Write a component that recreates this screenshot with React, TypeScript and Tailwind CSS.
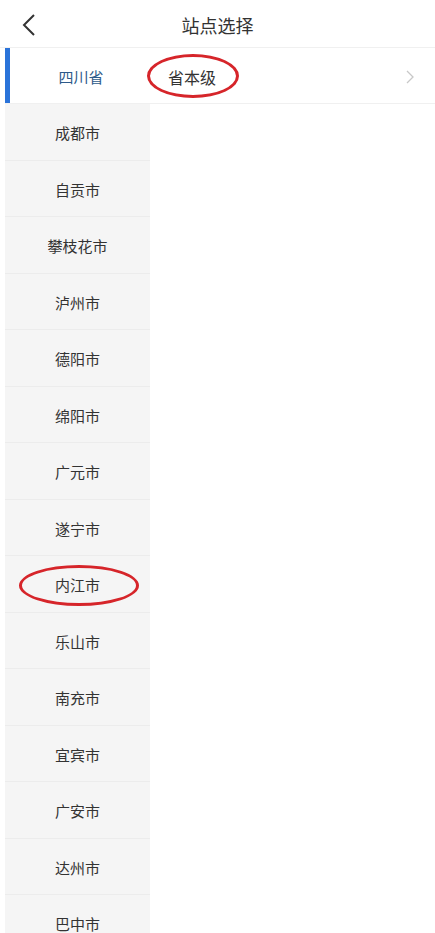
import React from 'react';

const cities = [
  '成都市', '自贡市', '攀枝花市', '泸州市', '德阳市', '绵阳市', '广元市', '遂宁市',
  '内江市', '乐山市', '南充市', '宜宾市', '广安市', '达州市', '巴中市',
];

const font = { fontFamily: '"Noto Sans CJK SC", "Noto Sans", sans-serif' };

const App = () => {
  return (
    <div className="w-[435px] h-[933px] overflow-hidden bg-white text-[#333]" style={font}>
      {/* header */}
      <div className="relative h-[48px] flex items-center justify-center pt-[2px] border-b border-[#f0f0f0]">
        <svg className="absolute left-[20px] top-[13px]" width="18" height="24" viewBox="0 0 18 24" fill="none">
          <path d="M14 2 L4 12 L14 22" stroke="#333" strokeWidth="2" />
        </svg>
        <span className="text-[18px] leading-none">站点选择</span>
      </div>

      <div className="pl-[5px]">
        {/* province row */}
        <div className="flex h-[56px] border-b border-[#f0f0f0]">
          <div className="w-[145px] flex items-center pt-[3px] border-l-[5px] border-[#2a73d9]">
            <span className="flex-1 text-center text-[15px] text-[#2d5a8a] pl-[2px]">四川省</span>
          </div>
          <div className="relative flex-1 flex items-center justify-between pt-[3px] pl-[18px] pr-[20px]">
            <span className="text-[16px]">省本级</span>
            <svg width="10" height="16" viewBox="0 0 10 16" fill="none">
              <path d="M2 2 L8 8 L2 14" stroke="#c8c8c8" strokeWidth="1.3" />
            </svg>
            <div className="absolute left-[-3px] top-[6px] w-[92px] h-[44px] rounded-[50%] border-[3px] border-[#d6252a]" />
          </div>
        </div>

        {/* city list */}
        <div className="w-[145px] bg-[#f5f5f5]">
          {cities.map((city) => (
            <div
              key={city}
              className="relative h-[56.5px] flex items-center justify-center pt-[3px] border-b border-[#ececec] text-[15px]"
            >
              {city}
              {city === '内江市' && (
                <div className="absolute left-[14px] top-[9px] w-[120px] h-[41px] rounded-[50%] border-[3px] border-[#d6252a]" />
              )}
            </div>
          ))}
        </div>
      </div>
    </div>
  );
};

export default App;
